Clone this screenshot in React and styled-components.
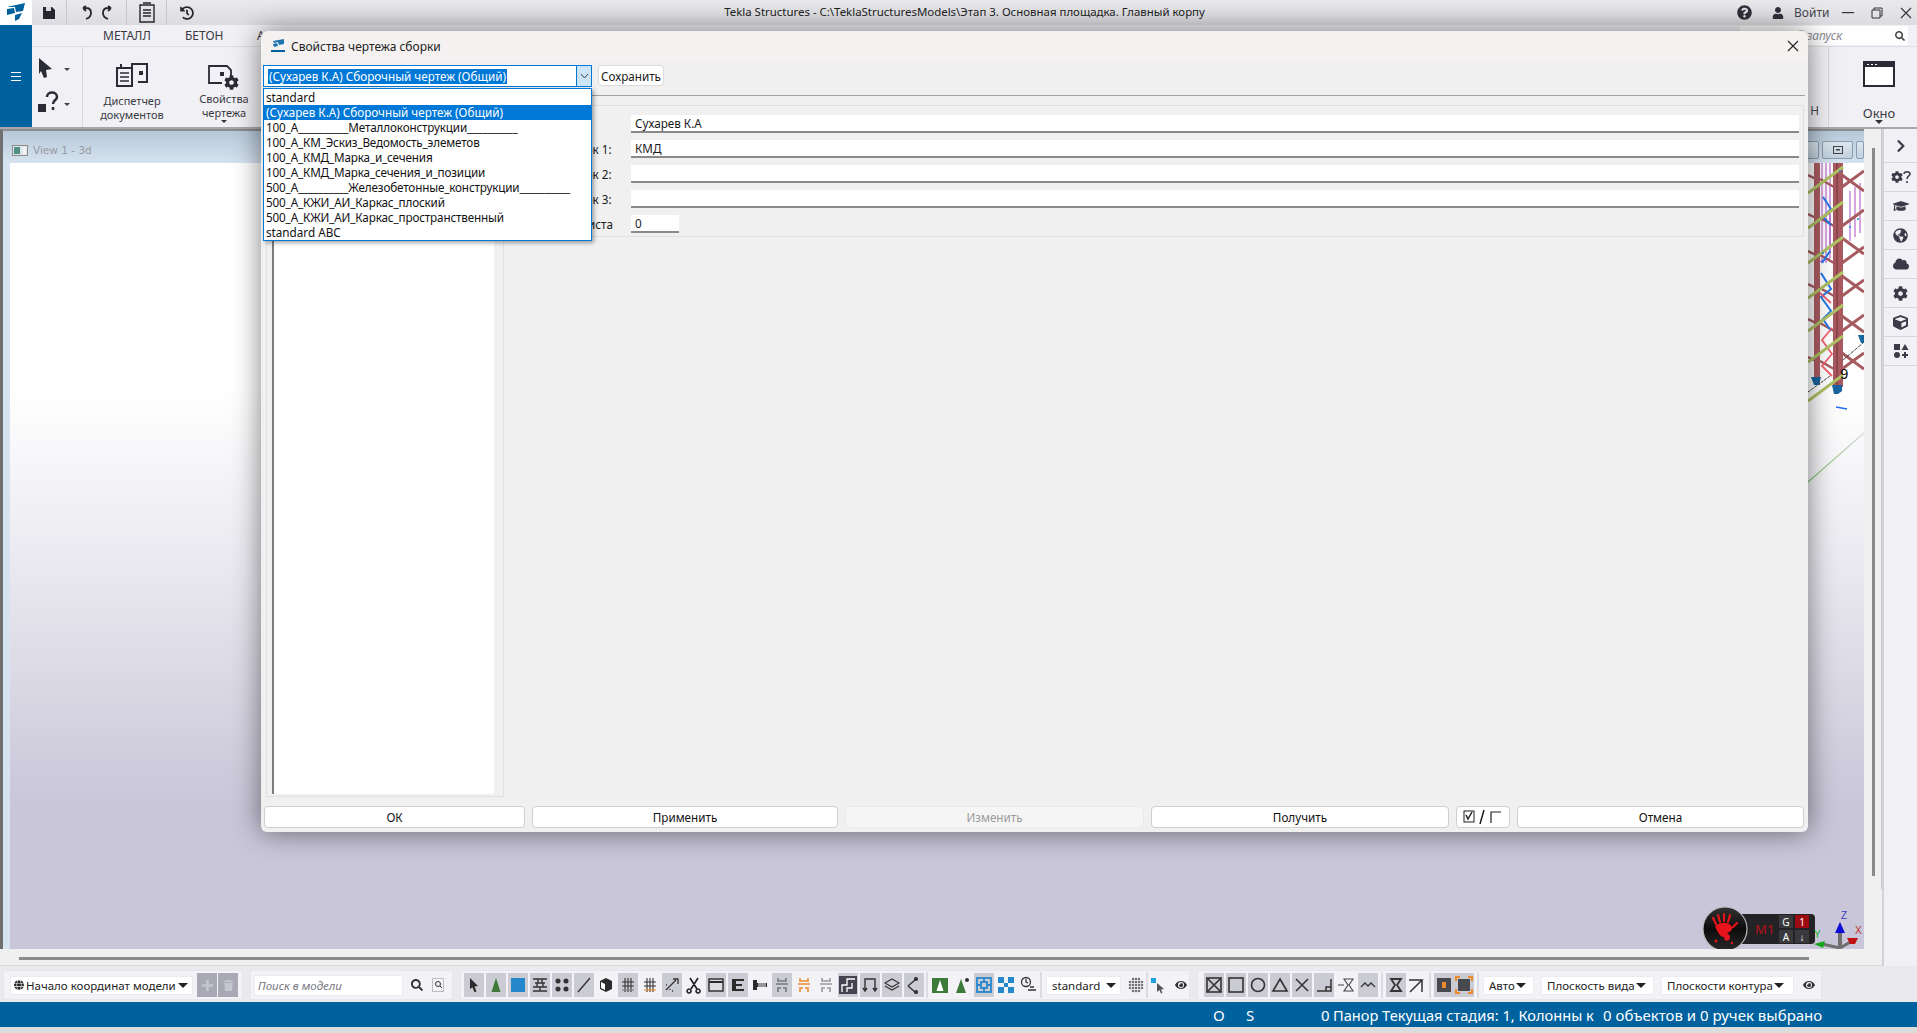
import React from 'react';
import styled, { createGlobalStyle } from 'styled-components';
import { FaQuestionCircle, FaUser, FaSearch, FaHistory, FaGraduationCap, FaGlobeAmericas, FaCloud, FaCog, FaCube, FaChevronRight, FaEye, FaGlobe, FaPlus, FaTrash } from 'react-icons/fa';

const GlobalStyle = createGlobalStyle`
  html, body { margin: 0; padding: 0; overflow: hidden; background: #e9e9ee; }
  * { box-sizing: border-box; }
`;

const Page = styled.div`
  position: relative;
  display: flex;
  flex-direction: column;
  width: 1917px;
  height: 1033px;
  overflow: hidden;
  font-family: "Noto Sans", "Open Sans", sans-serif;
  font-size: 11.7px;
  color: #1a1a1a;
  background: #e9e9ee;
`;

/* title bar */
const TitleBar = styled.div`
  display: flex;
  align-items: center;
  height: 25px;
  flex: none;
  background: linear-gradient(#eaeaed, #dcdce0);
`;
const LogoCell = styled.div`
  display: flex;
  align-items: center;
  justify-content: center;
  width: 32px;
  height: 25px;
  background: #fff;
`;
const QuickTools = styled.div`
  display: flex;
  align-items: center;
  width: 175px;
  height: 25px;
  color: #26262e;
`;
const QuickIcon = styled.span`
  display: flex;
  align-items: center;
  justify-content: center;
  flex: none;
  width: ${p => p.w || 26}px;
  height: 25px;
  margin-left: ${p => p.ml || 0}px;
  border-right: ${p => (p.sep ? '1px solid #c8c8cc' : 'none')};
`;
const AppTitle = styled.div`
  flex: 1;
  padding: 0 8px 2px 0;
  text-align: center;
  font-size: 11.45px;
  white-space: nowrap;
  color: #222;
`;
const WinControls = styled.div`
  display: flex;
  align-items: center;
  flex: none;
  width: 187px;
  padding-left: 7px;
  color: #30303c;
`;
const LoginText = styled.span`
  flex: none;
  width: 33px;
  margin: 0 9px 0 6px;
  font-size: 12px;
  color: #44444e;
`;

/* ribbon */
const RibbonWrap = styled.div`
  display: flex;
  height: 104px;
  flex: none;
  border-bottom: 2px solid #a8a8ac;
  background: #f1f1f5;
`;
const BlueStrip = styled.div`
  display: flex;
  align-items: center;
  justify-content: center;
  width: 32px;
  background: #00619f;
`;
const Burger = styled.div`
  width: 10px;
  height: 9px;
  border-top: 1px solid #fff;
  border-bottom: 1px solid #fff;
  position: relative;
  &::after {
    content: '';
    position: absolute;
    left: 0;
    right: 0;
    top: 3px;
    height: 1px;
    background: #fff;
  }
`;
const RibbonMain = styled.div`
  flex: 1;
  display: flex;
  flex-direction: column;
`;
const TabRow = styled.div`
  display: flex;
  align-items: center;
  height: 22px;
  padding-left: 71px;
  border-bottom: 1px solid #dcdce2;
`;
const Tab = styled.div`
  width: ${p => p.w}px;
  font-size: 12px;
  color: #3a3a44;
`;
const QuickSearch = styled.div`
  display: flex;
  align-items: center;
  justify-content: space-between;
  width: 168px;
  height: 19px;
  margin: 0 9px 0 auto;
  padding: 0 3px 0 10px;
  background: #fff;
  font-style: italic;
  font-size: 12px;
  color: #8a8a94;
`;
const RibbonBody = styled.div`
  flex: 1;
  display: flex;
`;
const PointerGroup = styled.div`
  display: flex;
  flex-direction: column;
  justify-content: space-around;
  width: 51px;
  padding: 4px 0 6px 6px;
  border-right: 1px solid #d8d8de;
`;
const RibbonButton = styled.div`
  display: flex;
  flex-direction: column;
  align-items: center;
  width: ${p => p.w}px;
  padding-top: ${p => p.top || 14}px;
  padding-left: ${p => p.left || 0}px;
  font-size: ${p => p.fs || 11}px;
  line-height: 14px;
  text-align: center;
  color: #3a3a44;
`;
const RibbonLabel = styled.div`
  margin-top: ${p => p.gap || 6}px;
`;
const SmallCaret = styled.span`
  display: inline-block;
  flex: none;
  width: 0;
  height: 0;
  border-left: ${p => p.s || 3}px solid transparent;
  border-right: ${p => p.s || 3}px solid transparent;
  border-top: ${p => p.s || 3}px solid ${p => p.c || '#333'};
`;
const RibbonRight = styled.div`
  display: flex;
  margin-left: auto;
`;
const RibbonHint = styled.div`
  display: flex;
  align-items: flex-end;
  justify-content: flex-end;
  width: 30px;
  padding: 0 9px 9px 0;
  border-right: 1px solid #d8d8de;
  color: #44444e;
`;

/* centre */
const Middle = styled.div`
  flex: 1;
  display: flex;
  min-height: 0;
`;
const Workspace = styled.div`
  flex: 1;
  display: flex;
  flex-direction: column;
  background: #f0f0f0;
`;
const ViewRow = styled.div`
  flex: 1;
  display: flex;
  min-height: 0;
`;
const ViewWindow = styled.div`
  flex: 1;
  display: flex;
  flex-direction: column;
  border-left: 3px solid #6f6f6f;
  border-top: 2px solid #8b8b8b;
  background: #d6e3f0;
`;
const ViewHeader = styled.div`
  display: flex;
  align-items: center;
  height: 32px;
  flex: none;
  padding: 6px 0 0 9px;
  background: linear-gradient(#b6c8d9, #d6e3ef);
  font-family: "DejaVu Sans", sans-serif;
  font-size: 10.5px;
  color: #9a9aa2;
  gap: 5px;
`;
const ViewButtons = styled.div`
  display: flex;
  gap: 3px;
  margin-left: auto;
  width: 60px;
`;
const ViewButton = styled.div`
  display: flex;
  align-items: center;
  justify-content: center;
  flex: none;
  width: ${p => p.w}px;
  height: 18px;
  border: 1px solid #8a9cae;
  border-radius: 2px;
  background: linear-gradient(#dce6ef, #c2d1df);
`;
const ViewCanvas = styled.div`
  position: relative;
  flex: 1;
  margin-left: 7px;
  overflow: hidden;
  background: linear-gradient(#fff 0, #fff 29%, #e6e5ed 55%, #c8c6d8 82%, #c8c6d8 100%);
`;
const ModelDrawing = styled.svg`
  position: absolute;
  right: 0;
  top: 0;
`;
const Gizmo = styled.svg`
  position: absolute;
  right: 0;
  bottom: 0;
`;
const MouseBadge = styled.div`
  position: absolute;
  right: 49px;
  bottom: 5px;
  display: flex;
  align-items: center;
  height: 30px;
  width: 92px;
  padding-left: 32px;
  border-radius: 4px;
  background: #232325;
`;
const MouseDisc = styled.svg`
  position: absolute;
  left: -21px;
  top: -8px;
`;
const MouseName = styled.span`
  width: 24px;
  font-size: 13px;
  font-weight: 500;
  color: #a3141c;
`;
const MouseKeys = styled.div`
  display: grid;
  grid-template-columns: 14px 14px;
  grid-auto-rows: 13px;
  gap: 2px;
`;
const MouseKey = styled.span`
  display: flex;
  align-items: center;
  justify-content: center;
  font-size: 10px;
  line-height: 1;
  color: #fff;
  background: ${p => (p.red ? '#9e0a12' : '#3a3a3c')};
`;
const VScroll = styled.div`
  flex: none;
  width: 18px;
  padding: 19px 0 0 8px;
  display: flex;
  background: #f0f0f0;
  border-right: 1px solid #c8c8cc;
  height: 760px;
`;
const VThumb = styled.div`
  width: 3px;
  height: 728px;
  background: #8a8a8a;
`;
const HScroll = styled.div`
  flex: none;
  height: 17px;
  padding: 8px 73px 0 19px;
  background: #f0f0f0;
  border-bottom: 1px solid #d8d8dc;
`;
const HThumb = styled.div`
  height: 3px;
  background: #8a8a8a;
`;
const SideBar = styled.div`
  flex: none;
  width: 35px;
  border-left: 2px solid #d2d2d8;
  background: #f1f1f5;
`;
const SideCell = styled.div`
  display: flex;
  align-items: center;
  justify-content: center;
  height: ${p => p.h || 29}px;
  border-bottom: 1px solid #d6d6dc;
  color: #3a3a48;
`;

/* bottom toolbar */
const BottomBar = styled.div`
  display: flex;
  flex: none;
  gap: 7px;
  height: 30px;
  margin-top: 4px;
  padding-left: 3px;
`;
const Panel = styled.div`
  display: flex;
  align-items: center;
  flex: none;
  width: ${p => p.w}px;
  padding-left: ${p => p.pl || 0}px;
  background: #f3f3f7;
  border: 1px solid #e6e6ec;
`;
const WhiteCombo = styled.div`
  display: flex;
  align-items: center;
  justify-content: ${p => (p.tight ? 'flex-start' : 'space-between')};
  gap: 1px;
  flex: none;
  width: ${p => p.w}px;
  height: 19px;
  margin: ${p => p.m || 0};
  padding: 0 4px 0 ${p => p.pl || 5}px;
  background: #fff;
  border: 1px solid #ececf0;
  font-size: 11.5px;
  white-space: nowrap;
  color: #222;
  overflow: hidden;
`;
const OriginLabel = styled.span`
  display: flex;
  align-items: center;
  gap: 2px;
`;
const GreyButton = styled.div`
  display: flex;
  align-items: center;
  justify-content: center;
  width: 20px;
  height: 24px;
  margin-left: ${p => p.ml || 4}px;
  background: #a9a9b6;
  color: #c6c6d0;
`;
const SearchBox = styled.div`
  display: flex;
  align-items: center;
  width: 149px;
  height: 21px;
  padding-left: 3px;
  background: #fff;
  border: 1px solid #ececf0;
  font-style: italic;
  font-size: 11.5px;
  color: #77777f;
`;
const PlainIcon = styled.span`
  display: flex;
  align-items: center;
  justify-content: center;
  width: 20px;
  margin-left: ${p => p.ml || 0}px;
  color: #333;
`;
const ToolGroup = styled.div`
  display: flex;
  gap: 2px;
`;
const ToolButton = styled.div`
  display: flex;
  align-items: center;
  justify-content: center;
  width: 20px;
  height: 24px;
  background: ${p => (p.on ? '#cbcbd3' : 'transparent')};
`;
const ToolSep = styled.div`
  flex: none;
  width: 2px;
  height: 26px;
  margin: 0 ${p => p.m || 2}px;
  background: #dcdce2;
`;

const StatusBar = styled.div`
  display: flex;
  align-items: center;
  flex: none;
  height: 25px;
  margin-top: 2px;
  background: #00619f;
  color: #fff;
  font-size: 15px;
  white-space: nowrap;
`;
const StatusSlot = styled.span`
  width: ${p => p.w}px;
  margin-right: ${p => p.mr || 0}px;
  flex: none;
  overflow: hidden;
  font-size: ${p => p.fs || 15}px;
`;
const BottomStrip = styled.div`
  height: 6px;
  flex: none;
  background: #dcdcdc;
`;

/* dialog */
const Dialog = styled.div`
  position: absolute;
  left: 261px;
  top: 31px;
  width: 1547px;
  height: 801px;
  display: flex;
  flex-direction: column;
  border-radius: 8px 8px 6px 6px;
  background: #f0f0f0;
  box-shadow: 0 0 28px rgba(0, 0, 0, 0.5);
`;
const DialogHead = styled.div`
  display: flex;
  align-items: center;
  flex: none;
  height: 30px;
  padding: 0 9px;
  border-radius: 8px 8px 0 0;
  background: #f5f1f1;
  font-size: 12px;
  color: #222;
  gap: 5px;
`;
const DialogClose = styled.span`
  display: flex;
  margin-left: auto;
`;
const AttrRow = styled.div`
  display: flex;
  align-items: flex-start;
  flex: none;
  gap: 6px;
  height: 35px;
  margin: 0 3px 0 2px;
  padding-top: 4px;
  border-bottom: 1px solid #a2a2a2;
`;
const Combo = styled.div`
  display: flex;
  align-items: center;
  width: 329px;
  height: 22px;
  border: 1px solid #0078d7;
  background: #fff;
`;
const ComboText = styled.div`
  flex: 1;
  padding-left: 4px;
`;
const Selected = styled.span`
  display: inline-block;
  height: 15px;
  line-height: 15px;
  padding: 0 1px;
  background: #0078d7;
  color: #fff;
`;
const ComboArrow = styled.div`
  display: flex;
  align-items: center;
  justify-content: center;
  width: 15px;
  height: 100%;
  background: #cce4f7;
  border-left: 1px solid #0078d7;
`;
const SaveButton = styled.div`
  display: flex;
  align-items: center;
  justify-content: center;
  width: 66px;
  height: 21px;
  border: 1px solid #dcdcdc;
  border-radius: 4px;
  background: #fff;
`;
const DropList = styled.div`
  position: absolute;
  left: 2px;
  top: 57px;
  width: 329px;
  padding-top: 1px;
  border: 1px solid #0078d7;
  background: #fff;
  box-shadow: 2px 2px 4px rgba(0, 0, 0, 0.35);
  z-index: 2;
`;
const DropItem = styled.div`
  height: 15px;
  padding-left: 2px;
  line-height: 15px;
  white-space: nowrap;
  letter-spacing: ${p => (p.snake ? '-0.15px' : 'normal')};
  background: ${p => (p.active ? '#0078d7' : 'transparent')};
  color: ${p => (p.active ? '#fff' : '#111')};
`;
const DialogBody = styled.div`
  flex: 1;
  display: flex;
  min-height: 0;
  padding: 9px 5px 0 5px;
`;
const ListGroup = styled.div`
  display: flex;
  flex: none;
  width: 238px;
  height: 692px;
  padding: 0 9px 2px 5px;
  border: 1px solid #e0e0e0;
`;
const TreeList = styled.div`
  flex: 1;
  background: #fff;
  border-left: 2px solid #7d7d7d;
`;
const Fields = styled.div`
  flex: none;
  width: 1300px;
  height: 132px;
  padding: 9px 4px 0 35px;
  border: 1px solid #e0e0e0;
`;
const FieldRow = styled.div`
  display: flex;
  align-items: center;
  height: 18px;
  margin-bottom: 7px;
`;
const FieldLabel = styled.label`
  width: 91px;
  flex: none;
  white-space: nowrap;
`;
const FieldInput = styled.div`
  flex: ${p => (p.w ? 'none' : 1)};
  width: ${p => (p.w ? `${p.w}px` : 'auto')};
  height: 18px;
  padding-left: 4px;
  line-height: 16px;
  background: #fff;
  border-bottom: 2px solid #8a8a8a;
`;
const ActionBar = styled.div`
  display: flex;
  flex: none;
  gap: 7px;
  height: 23px;
  margin: 0 4px 3px 3px;
`;
const ActionButton = styled.div`
  display: flex;
  align-items: center;
  justify-content: center;
  flex: none;
  width: ${p => p.w}px;
  height: 22px;
  border: 1px solid ${p => (p.disabled ? '#eaeaea' : '#cfcfcf')};
  border-radius: 4px;
  background: ${p => (p.disabled ? '#f5f5f5' : '#fff')};
  color: ${p => (p.disabled ? '#9a9a9a' : '#111')};
`;

const Tekla = ({ s = 22 }) => (
  <svg width={s} height={s} viewBox="0 0 22 22">
    <path d="M2 5 20 1l-2 8-7 1-1-5z" fill="#00619f" />
    <path d="M2 7l7-1 1 5-8 2z" fill="#00619f" />
    <path d="M10 13l7-2-3 6-4 2z" fill="#00619f" />
  </svg>
);

const DialogLogo = () => (
  <svg width="16" height="16" viewBox="0 0 16 16">
    <path d="M3 3 14 1v5l-5 1-1-3-4 1z" fill="#1e74b0" />
    <path d="M3 6l4-1 1 3-4 1z" fill="#1e74b0" />
    <rect x="1" y="12" width="14" height="2" fill="#00619f" />
  </svg>
);

const stroke = { fill: 'none', stroke: '#333', strokeWidth: 1.4 };

const bracket = c => (
  <g fill="none" stroke={c} strokeWidth="1.6">
    <path d="M5 2v3h8V2M3 8h12M5 16v-4h3M13 16v-4h-3" />
  </g>
);
const hash = c => (
  <g stroke="#333" strokeWidth="1.1">
    <path d="M6 2v14M9 2v14M12 2v14M3 6h12M3 10h12" />
    <path d="M3 14h12" stroke={c} />
  </g>
);

const toolIcons = {
  cursor: <path d="M5 2l8 8-3.500.5 2 5-2 .8-2-5L5 13z" fill="#2b2b2b" />,
  greenTri: <path d="M9 2l4.500 14h-9z" fill="#3d7a3a" />,
  blueSq: <rect x="2" y="2" width="14" height="14" fill="#2587cc" />,
  wall: <path d="M2 3h14M4 7h10M2 11h14M2 15h14M7 3v4M11 3v4M6 7v4M12 7v4M9 11v4" {...stroke} />,
  dots: <g fill="#333"><circle cx="5" cy="5" r="2.500" /><circle cx="13" cy="5" r="2.500" /><circle cx="5" cy="13" r="2.500" /><circle cx="13" cy="13" r="2.500" /></g>,
  slash: <path d="M3 16 15 2" {...stroke} />,
  cube: <g><path d="M9 2l6 3v8l-6 3-6-3V5z" fill="#2b2b2b" /><path d="M4 6l4 2v6l-4-2z" fill="#fff" /></g>,
  hash: hash('#888'),
  hashOrange: hash('#ef8a2c'),
  scatter: <g fill="none" stroke="#333" strokeWidth="1.300"><path d="M3 14 13 4M10 3h5v5" /><path d="M3 9h2M7 13v2M9 15h2" strokeDasharray="1 1" /></g>,
  scissors: <path d="M5 2l7 11M13 2 6 13M4 13a2 2 0 1 0 .1 0M13 13a2 2 0 1 0 .1 0" fill="none" stroke="#222" strokeWidth="1.600" />,
  win: <g><rect x="2" y="3" width="14" height="12" fill="#dcdce2" stroke="#2b2b2b" strokeWidth="1.400" /><path d="M2 6h14" stroke="#2b2b2b" strokeWidth="2" /></g>,
  ibeam: <path d="M3 3h12v2H7v3h6v2H7v3h8v2H3z" fill="#2b2b2b" />,
  bolt: <g fill="#2b2b2b"><rect x="2" y="4" width="4" height="10" /><path d="M6 7h10v4H6z" /><path d="M8 7v4M10 7v4M12 7v4M14 7v4" stroke="#fff" /></g>,
  bracketGrey: bracket('#77777f'),
  bracketOrange: bracket('#ef8a2c'),
  bracketGrey2: bracket('#9a9a9a'),
  stairs: <g><rect width="18" height="18" fill="#444450" /><path d="M3 16V9h5V3h8M8 16v-4h5V7" fill="none" stroke="#fff" strokeWidth="1.300" /></g>,
  pi: <path d="M4 15V3h10v12M2 12l2 3 2-3M12 12l2 3 2-3" {...stroke} />,
  layers: <g fill="none" stroke="#333" strokeWidth="1.100"><path d="M9 3l7 4-7 4-7-4z" /><path d="M2 10l7 4 7-4" /></g>,
  node: <g fill="none" stroke="#333" strokeWidth="1.400"><path d="M3 10 10 4M3 10l7 6" /><circle cx="11" cy="3" r="1.400" fill="#333" /><circle cx="11" cy="16" r="1.400" fill="#333" /></g>,
  greenBox: <g><rect x="1" y="2" width="16" height="15" fill="#3d7a3a" /><path d="M9 4l3.500 11h-7z" fill="#fff" /></g>,
  greenDot: <g><path d="M8 3l5 14H3z" fill="#3d7a3a" /><circle cx="14" cy="4" r="2" fill="#333" /></g>,
  blueCross: <g fill="none" stroke="#2587cc" strokeWidth="1.800"><rect x="2" y="2" width="14" height="14" /><rect x="6" y="6" width="6" height="6" /><path d="M2 9h4M12 9h4M9 2v4M9 12v4" /></g>,
  blueCorners: <g fill="#2587cc"><rect x="1" y="1" width="6" height="6" /><rect x="11" y="1" width="6" height="6" /><rect x="1" y="11" width="6" height="6" /><rect x="11" y="11" width="6" height="6" /><rect x="7" y="7" width="4" height="4" /></g>,
  clockman: <g fill="none" stroke="#333" strokeWidth="1.300"><circle cx="7" cy="6" r="4.500" /><path d="M7 3v3l2 1M9 14h8M11 11h4" /></g>,
  mesh: <g fill="#777">{[3, 6, 9, 12, 15].flatMap(x => [3, 6, 9, 12, 15].map(y => (Math.hypot(x - 9, y - 9) < 8 ? <circle key={`${x}-${y}`} cx={x} cy={y} r="1.300" /> : null)))}</g>,
  dotCursor: <g><rect x="2" y="2" width="5" height="5" fill="#19a0e0" /><path d="M8 7l7 6-3 .5 1.500 3.500-1.500.5-1.500-3.500L8 16z" fill="#555" /></g>,
  boxX: <g fill="none" stroke="#333" strokeWidth="1.600"><rect x="2" y="2" width="14" height="14" /><path d="M2 2l14 14M16 2 2 16" /></g>,
  box: <rect x="2" y="2" width="14" height="14" fill="none" stroke="#333" strokeWidth="1.600" />,
  circle: <circle cx="9" cy="9" r="6.500" fill="none" stroke="#333" strokeWidth="1.600" />,
  tri: <path d="M9 3l7 12H2z" fill="none" stroke="#333" strokeWidth="1.600" />,
  cross: <path d="M3 3l12 12M15 3 3 15" fill="none" stroke="#333" strokeWidth="1.500" />,
  corner: <path d="M2 15h14V3M11 15v-4h5" fill="none" stroke="#333" strokeWidth="1.500" />,
  dashGlass: <path d="M7 3h9l-4 6 4 6H7l4-6zM1 9h6" fill="none" stroke="#444" strokeWidth="1.100" />,
  wave: <path d="M2 11l4-4 3 3 3-3 4 4" fill="none" stroke="#333" strokeWidth="1.300" />,
  glass: <path d="M4 3h10l-4 6 4 6H4l4-6z" fill="none" stroke="#333" strokeWidth="1.800" />,
  arrowCorner: <path d="M2 4h13L3 16M15 4v12" fill="none" stroke="#333" strokeWidth="1.500" />,
  orangeDot: <g><rect x="2" y="2" width="14" height="14" fill="#48484f" /><rect x="7" y="6" width="4" height="6" fill="#ef8a2c" /></g>,
  orangeCorners: <g><rect x="3" y="3" width="12" height="12" fill="#48484f" /><path d="M1 5V1h4M13 1h4v4M17 13v4h-4M5 17H1v-4" fill="none" stroke="#ef8a2c" strokeWidth="2" /></g>,
};

const Tool = ({ name, on }) => (
  <ToolButton on={on}>
    <svg width="18" height="18" viewBox="0 0 18 18">{toolIcons[name]}</svg>
  </ToolButton>
);

const Tools = ({ items }) => (
  <ToolGroup>
    {items.map(([name, on]) => <Tool key={name} name={name} on={on} />)}
  </ToolGroup>
);

const geometry = [
  ['cursor', 1], ['greenTri', 1], ['blueSq', 1], ['wall', 1], ['dots', 1], ['slash', 1], ['cube', 0],
  ['hash', 1], ['hashOrange', 0], ['scatter', 1], ['scissors', 0], ['win', 1], ['ibeam', 1], ['bolt', 0],
  ['bracketGrey', 1], ['bracketOrange', 0], ['bracketGrey2', 0], ['stairs', 1], ['pi', 1], ['layers', 1], ['node', 1],
];
const snapTools = [['greenBox', 0], ['greenDot', 0], ['blueCross', 1], ['blueCorners', 0], ['clockman', 0]];
const shapeTools = [
  ['boxX', 1], ['box', 1], ['circle', 1], ['tri', 1], ['cross', 1], ['corner', 1], ['dashGlass', 0], ['wave', 1],
];

const drawings = [
  'standard',
  '(Сухарев К.А) Сборочный чертеж (Общий)',
  '100_А__________Металлоконструкции__________',
  '100_А_КМ_Эскиз_Ведомость_элеметов',
  '100_А_КМД_Марка_и_сечения',
  '100_А_КМД_Марка_сечения_и_позиции',
  '500_А__________Железобетонные_конструкции__________',
  '500_А_КЖИ_АИ_Каркас_плоский',
  '500_А_КЖИ_АИ_Каркас_пространственный',
  'standard ABC',
];

const fields = [
  ['Чертил:', 'Сухарев К.А'],
  ['Заголовок 1:', 'КМД'],
  ['Заголовок 2:', ''],
  ['Заголовок 3:', ''],
];

const greens = [0, 35, 70, 105, 138, 169, 208];
const beamsUp = [8, 47, 84, 117, 152, 190];
const beamsDown = [12, 75, 113, 153, 190];

const Model = () => (
  <ModelDrawing width="56" height="330" viewBox="0 0 56 330">
    <g stroke="#b04cc4" strokeWidth="1" fill="none">
      <path d="M7 0v100M14 0v100M18 0v100M22 0v90M42 28v50M47 24v50M52 20v50" />
      <path d="M8 60l14-10v45L8 100" />
    </g>
    <g stroke="#a65b60" strokeWidth="3" fill="none">
      {beamsUp.map(y => <path key={y} d={`M34 ${y + 16}L56 ${y}`} />)}
      {beamsDown.map(y => <path key={y} d={`M34 ${y}L56 ${y + 16}`} />)}
      {beamsUp.map(y => <path key={y} d={`M0 ${y + 4}L8 ${y + 8}M12 ${y + 8}L26 ${y + 16}`} strokeWidth="2.500" />)}
    </g>
    <rect x="6" y="0" width="6" height="222" fill="#ab5c62" />
    <rect x="25" y="0" width="10" height="224" fill="#a85a60" />
    <rect x="28" y="0" width="2" height="224" fill="#8f474d" />
    <g stroke="#2277e8" strokeWidth="2" fill="none">
      <path d="M15 34l8 12-8 8 8 8M14 100l8-12M13 110l10 16-10 8 10 14-8 8 8 12" />
    </g>
    <g stroke="#f0606e" strokeWidth="1.800" fill="none">
      <path d="M24 165l-10 12 10 14-10 12 10 10" />
      <path d="M14 55l9-8M12 130l11 10" />
    </g>
    <g stroke="#afc264" strokeWidth="3">
      {greens.map(y => <path key={y} d={`M0 ${y + 30}L35 ${y + 4}`} />)}
    </g>
    <g fill="#1a8fd0">
      <circle cx="32" cy="8" r="1" />
      <circle cx="42" cy="64" r="1" />
      <circle cx="15" cy="90" r="1" />
      <circle cx="50" cy="56" r="1" />
    </g>
    <g stroke="#111" strokeWidth=".8" fill="none">
      <path d="M0 229L22 213" strokeDasharray="3 1" />
      <path d="M35 197L55 180" strokeDasharray="4 1" />
    </g>
    <g fill="#17649e">
      <path d="M3 214h10l-2 8H6z" />
      <path d="M24 222h10v6l-4 3h-4z" />
      <path d="M50 172h6v8h-3z" />
    </g>
    <text x="32" y="216" fontFamily="Liberation Sans, sans-serif" fontSize="15" fill="#111">9</text>
    <path d="M28 244l11 2" stroke="#1e6ff0" strokeWidth="1.500" />
    <defs>
      <linearGradient id="fade" x1="0" y1="1" x2="1" y2="0">
        <stop offset="0" stopColor="#7fc06a" />
        <stop offset="1" stopColor="#d8d8dc" />
      </linearGradient>
    </defs>
    <path d="M0 319 56 270" stroke="url(#fade)" strokeWidth="1.300" />
  </ModelDrawing>
);

const Axes = () => (
  <Gizmo width="56" height="42" viewBox="0 0 56 42">
    <path d="M32 41V24" stroke="#6f6f6f" strokeWidth="4" />
    <path d="M32 41 14 37" stroke="#6f6f6f" strokeWidth="3" />
    <path d="M32 41 44 34" stroke="#6f6f6f" strokeWidth="3" />
    <path d="M32 15l5 11H27z" fill="#0c0cd8" />
    <path d="M39 31h11l-3 6h-5z" fill="#c01010" />
    <path d="M6 37l11-3-2 7z" fill="#17a81c" />
    <text x="33" y="12" fontSize="10" fill="#3a3ac8" fontFamily="Liberation Sans, sans-serif">Z</text>
    <text x="47" y="27" fontSize="10" fill="#c02828" fontFamily="Liberation Sans, sans-serif">X</text>
    <text x="6" y="31" fontSize="10" fill="#19b81e" fontFamily="Liberation Sans, sans-serif">Y</text>
  </Gizmo>
);

const BloodyMouse = () => (
  <MouseBadge>
    <MouseDisc width="46" height="46" viewBox="0 0 46 46">
      <defs>
        <linearGradient id="disc" x1="0" y1="0" x2="0" y2="1">
          <stop offset="0" stopColor="#333" />
          <stop offset=".5" stopColor="#0c0c0c" />
          <stop offset="1" stopColor="#2a2a2a" />
        </linearGradient>
      </defs>
      <circle cx="23" cy="23" r="22" fill="url(#disc)" stroke="#b8b8bc" strokeWidth="1.200" />
      <g stroke="#e8141c" strokeWidth="2.200" strokeLinecap="round">
        <path d="M14 18l-3-6M18 16l-2-7M22 15l0-7M26 16l2-7M31 21l4-4" />
      </g>
      <path d="M13 20c4-4 14-5 17 1 1 3-2 5-5 6 3 2 4 4 2 7-3 2-5 0-5-3-3 0-6-3-9-11z" fill="#e8141c" />
      <circle cx="14" cy="35" r="1.500" fill="#e8141c" />
      <circle cx="30" cy="37" r="1.200" fill="#e8141c" />
    </MouseDisc>
    <MouseName>M1</MouseName>
    <MouseKeys>
      <MouseKey>G</MouseKey>
      <MouseKey red>1</MouseKey>
      <MouseKey>A</MouseKey>
      <MouseKey>↓</MouseKey>
    </MouseKeys>
  </MouseBadge>
);

const PropertiesDialog = () => (
  <Dialog>
    <DialogHead>
      <DialogLogo />
      <span>Свойства чертежа сборки</span>
      <DialogClose>
        <svg width="12" height="12" viewBox="0 0 12 12"><path d="M1 1l10 10M11 1 1 11" stroke="#222" strokeWidth="1.100" /></svg>
      </DialogClose>
    </DialogHead>
    <AttrRow>
      <Combo>
        <ComboText><Selected>(Сухарев К.А) Сборочный чертеж (Общий)</Selected></ComboText>
        <ComboArrow>
          <svg width="9" height="6" viewBox="0 0 9 6"><path d="M1 1l3.500 4L8 1" fill="none" stroke="#444" /></svg>
        </ComboArrow>
      </Combo>
      <SaveButton>Сохранить</SaveButton>
    </AttrRow>
    <DropList>
      {drawings.map((d, i) => <DropItem key={d} active={i === 1} snake={d.includes('_')}>{d}</DropItem>)}
    </DropList>
    <DialogBody>
      <ListGroup><TreeList /></ListGroup>
      <Fields>
        {fields.map(([label, value]) => (
          <FieldRow key={label}>
            <FieldLabel>{label}</FieldLabel>
            <FieldInput>{value}</FieldInput>
          </FieldRow>
        ))}
        <FieldRow>
          <FieldLabel>Номер листа</FieldLabel>
          <FieldInput w={48}>0</FieldInput>
        </FieldRow>
      </Fields>
    </DialogBody>
    <ActionBar>
      <ActionButton w={261}>ОК</ActionButton>
      <ActionButton w={306}>Применить</ActionButton>
      <ActionButton w={299} disabled>Изменить</ActionButton>
      <ActionButton w={298}>Получить</ActionButton>
      <ActionButton w={54}>
        <svg width="44" height="16" viewBox="0 0 44 16">
          <rect x="3" y="2" width="10" height="11" fill="none" stroke="#222" />
          <path d="M5 6l2 4 4-7" fill="none" stroke="#222" strokeWidth="1.500" />
          <path d="M19 15l4-14" stroke="#111" strokeWidth="1.400" />
          <path d="M30 14V3h10" fill="none" stroke="#222" strokeWidth="1.200" />
        </svg>
      </ActionButton>
      <ActionButton w={287}>Отмена</ActionButton>
    </ActionBar>
  </Dialog>
);

const App = () => (
  <Page>
    <GlobalStyle />
    <TitleBar>
      <LogoCell><Tekla /></LogoCell>
      <QuickTools>
        <QuickIcon w={35} sep>
          <svg width="14" height="14" viewBox="0 0 14 14"><path d="M1 1h9l3 3v9H1z" fill="#26262e" /><rect x="4" y="1" width="5" height="4" fill="#dcdce0" /></svg>
        </QuickIcon>
        <QuickIcon w={60} sep>
          <svg width="38" height="15" viewBox="0 0 38 15"><path d="M5 3h3c3 0 5 2 5 5s-2 5-5 6M5 3l3-2M5 3l3 3M33 3h-3c-3 0-5 2-5 5s2 5 5 6M33 3l-3-2M33 3l-3 3" fill="none" stroke="#26262e" strokeWidth="1.800" /></svg>
        </QuickIcon>
        <QuickIcon w={40} sep>
          <svg width="18" height="22" viewBox="0 0 18 22"><path d="M5 1h8M2 3h14v17H2z" fill="none" stroke="#26262e" strokeWidth="1.400" /><path d="M5 8h8M5 11h8M5 14h8" stroke="#26262e" strokeWidth="1.300" /></svg>
        </QuickIcon>
        <QuickIcon w={40}><FaHistory size={14} /></QuickIcon>
      </QuickTools>
      <AppTitle>Tekla Structures - C:\TeklaStructuresModels\Этап 3. Основная площадка. Главный корпу</AppTitle>
      <WinControls>
        <QuickIcon w={15}><FaQuestionCircle size={15} /></QuickIcon>
        <QuickIcon w={20} ml={16}><FaUser size={12} /></QuickIcon>
        <LoginText>Войти</LoginText>
        <QuickIcon w={24}><svg width="12" height="2"><rect width="12" height="1.200" fill="#333" /></svg></QuickIcon>
        <QuickIcon w={34}><svg width="12" height="12" viewBox="0 0 12 12"><path d="M1 3h8v8H1zM3 3V1h8v8H9" fill="none" stroke="#333" /></svg></QuickIcon>
        <QuickIcon w={23}><svg width="12" height="12" viewBox="0 0 12 12"><path d="M1 1l10 10M11 1 1 11" stroke="#333" strokeWidth="1.100" /></svg></QuickIcon>
      </WinControls>
    </TitleBar>

    <RibbonWrap>
      <BlueStrip><Burger /></BlueStrip>
      <RibbonMain>
        <TabRow>
          <Tab w={82}>МЕТАЛЛ</Tab>
          <Tab w={72}>БЕТОН</Tab>
          <Tab w={20}>А</Tab>
          <QuickSearch>
            <span>Быстрый запуск</span>
            <FaSearch size={10} color="#444" />
          </QuickSearch>
        </TabRow>
        <RibbonBody>
          <PointerGroup>
            <svg width="40" height="22" viewBox="0 0 40 22">
              <path d="M1 1l13 11-6 1 1 7-3 1-3-7-2 3z" fill="#2b2b35" />
              <path d="M26 11h6l-3 3z" fill="#444" />
            </svg>
            <svg width="40" height="24" viewBox="0 0 40 24">
              <rect x="0" y="13" width="8" height="8" fill="#2b2b35" />
              <path d="M9 6c0-6 10-6 10 0 0 3-4 3-4 7M15 16v3" fill="none" stroke="#2b2b35" strokeWidth="2.500" />
              <path d="M26 12h6l-3 3z" fill="#444" />
            </svg>
          </PointerGroup>
          <RibbonButton w={98} top={16}>
            <svg width="32" height="24" viewBox="0 0 32 24">
              <path d="M1 5h15v18H1zM5 5V1M16 4V1h15v18H22" fill="none" stroke="#2b2b35" strokeWidth="2" />
              <path d="M4 10h9M4 14h9M4 18h9" stroke="#2b2b35" strokeWidth="1.500" />
              <rect x="23" y="8" width="4" height="4" fill="#2b2b35" />
            </svg>
            <RibbonLabel gap={7}>Диспетчер<br />документов</RibbonLabel>
          </RibbonButton>
          <RibbonButton w={86} top={17}>
            <svg width="32" height="27" viewBox="0 0 32 27">
              <path d="M14 19H1V2h18l4 4v6" fill="none" stroke="#2b2b35" strokeWidth="1.800" />
              <rect x="12" y="8" width="4" height="4" fill="#2b2b35" />
              <foreignObject x="15" y="11" width="16" height="16"><FaCog size={15} color="#2b2b35" /></foreignObject>
            </svg>
            <RibbonLabel gap={1}>Свойства<br />чертежа</RibbonLabel>
            <SmallCaret />
          </RibbonButton>
          <RibbonRight>
            <RibbonHint>Н</RibbonHint>
            <RibbonButton w={88} top={14} left={12} fs={13}>
              <svg width="32" height="26" viewBox="0 0 32 26">
                <rect x="1" y="1" width="30" height="24" fill="#fff" stroke="#2b2b35" strokeWidth="2" />
                <rect x="1" y="1" width="30" height="5" fill="#2b2b35" />
                <path d="M4 3.500h2M8 3.500h2M12 3.500h2" stroke="#fff" />
              </svg>
              <RibbonLabel gap={19}>Окно</RibbonLabel>
              <SmallCaret s={4} />
            </RibbonButton>
          </RibbonRight>
        </RibbonBody>
      </RibbonMain>
    </RibbonWrap>

    <Middle>
      <Workspace>
        <ViewRow>
          <ViewWindow>
            <ViewHeader>
              <svg width="16" height="11" viewBox="0 0 16 11">
                <rect x=".5" y=".5" width="15" height="10" fill="#dfe6ec" stroke="#8c8c8c" />
                <rect x="2" y="2" width="6" height="7" fill="#4f8f84" />
                <rect x="11" y="2" width="3" height="7" fill="#f4f4f4" />
              </svg>
              <span>View 1 - 3d</span>
              <ViewButtons>
                <ViewButton w={15} />
                <ViewButton w={31}>
                  <svg width="10" height="8" viewBox="0 0 10 8"><rect x=".5" y=".5" width="9" height="7" fill="none" stroke="#444" /><rect x="3" y="3" width="4" height="1.500" fill="#444" /></svg>
                </ViewButton>
                <ViewButton w={8} />
              </ViewButtons>
            </ViewHeader>
            <ViewCanvas>
              <Model />
              <BloodyMouse />
              <Axes />
            </ViewCanvas>
          </ViewWindow>
          <VScroll><VThumb /></VScroll>
        </ViewRow>
        <HScroll><HThumb /></HScroll>
      </Workspace>
      <SideBar>
        <SideCell h={34}><FaChevronRight size={14} /></SideCell>
        <SideCell>
          <FaCog size={12} />
          <svg width="8" height="12" viewBox="0 0 8 12"><path d="M1 3c0-3 6-3 6 0 0 2-3 2-3 5M4 10v2" fill="none" stroke="#3a3a48" strokeWidth="1.500" /></svg>
        </SideCell>
        <SideCell><FaGraduationCap size={16} /></SideCell>
        <SideCell><FaGlobeAmericas size={15} /></SideCell>
        <SideCell><FaCloud size={16} /></SideCell>
        <SideCell><FaCog size={15} /></SideCell>
        <SideCell><FaCube size={15} /></SideCell>
        <SideCell>
          <svg width="16" height="16" viewBox="0 0 16 16" fill="#3a3a48">
            <rect x="1" y="1" width="6" height="6" />
            <path d="M12 1l3.500 6h-7z" />
            <circle cx="4" cy="12" r="3" />
            <path d="M11 9h2v2h2v2h-2v2h-2v-2H9v-2h2z" />
          </svg>
        </SideCell>
      </SideBar>
    </Middle>

    <BottomBar>
      <Panel w={240} pl={6}>
        <WhiteCombo w={183} pl={3}>
          <OriginLabel><FaGlobe size={10} color="#222" />Начало координат модели</OriginLabel>
          <SmallCaret s={5} c="#222" />
        </WhiteCombo>
        <GreyButton><FaPlus size={13} /></GreyButton>
        <GreyButton ml={1}><FaTrash size={11} /></GreyButton>
      </Panel>
      <Panel w={203} pl={3}>
        <SearchBox>Поиск в модели</SearchBox>
        <PlainIcon ml={4}><FaSearch size={12} /></PlainIcon>
        <PlainIcon ml={1}>
          <svg width="12" height="14" viewBox="0 0 12 14">
            <rect x=".5" y=".5" width="11" height="13" fill="none" stroke="#888" strokeDasharray="1 1" />
            <circle cx="6" cy="6" r="2.500" fill="none" stroke="#333" />
            <path d="M8 8l2 2" stroke="#333" />
          </svg>
        </PlainIcon>
      </Panel>
      <Panel w={730} pl={3}>
        <Tools items={geometry} />
        <ToolSep />
        <Tools items={snapTools} />
        <ToolSep />
        <WhiteCombo w={75} m="0 6px 0 2px">
          <span>standard</span>
          <SmallCaret s={5} c="#222" />
        </WhiteCombo>
        <Tool name="mesh" />
        <ToolSep m={1} />
        <Tool name="dotCursor" />
        <PlainIcon ml={5}><FaEye size={12} /></PlainIcon>
      </Panel>
      <Panel w={625} pl={6}>
        <Tools items={shapeTools} />
        <ToolSep m={3} />
        <Tool name="glass" on />
        <Tool name="arrowCorner" />
        <ToolSep m={3} />
        <Tool name="orangeDot" on />
        <Tool name="orangeCorners" on />
        <ToolSep m={3} />
        <WhiteCombo w={51} m="0 7px 0 1px" tight>
          <span>Авто</span>
          <SmallCaret s={5} c="#222" />
        </WhiteCombo>
        <WhiteCombo w={113} m="0 7px 0 0" tight>
          <span>Плоскость вида</span>
          <SmallCaret s={5} c="#222" />
        </WhiteCombo>
        <WhiteCombo w={133} tight>
          <span>Плоскости контура</span>
          <SmallCaret s={5} c="#222" />
        </WhiteCombo>
        <PlainIcon ml={5}><FaEye size={12} /></PlainIcon>
      </Panel>
    </BottomBar>

    <StatusBar>
      <StatusSlot w={1213} />
      <StatusSlot w={33}>O</StatusSlot>
      <StatusSlot w={75}>S</StatusSlot>
      <StatusSlot w={12}>0</StatusSlot>
      <StatusSlot w={265} mr={5} fs={14.6}>Панор Текущая стадия: 1, Колонны к</StatusSlot>
      <StatusSlot w={240}>0 объектов и 0 ручек выбрано</StatusSlot>
    </StatusBar>
    <BottomStrip />

    <PropertiesDialog />
  </Page>
);

export default App;
